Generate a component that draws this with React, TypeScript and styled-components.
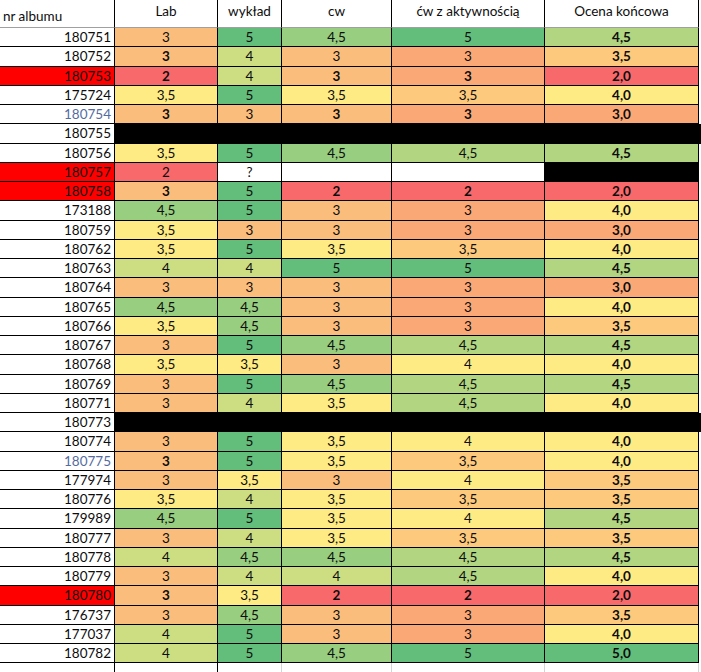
import styled, { createGlobalStyle } from "styled-components";

const GlobalStyle = createGlobalStyle`
  html, body {
    margin: 0;
    padding: 0;
    background: #ffffff;
  }
  body {
    font-family: Lato, "Liberation Sans", sans-serif;
    font-size: 13.5px;
    color: #0d0d0d;
  }
`;

const RED = "#F8696B";

// colour scales as excel put them on the sheet
const scaleA: Record<string, string> = {
  "2": RED,
  "3": "#FBBD7B",
  "3,5": "#FFEB84",
  "4": "#CCDD82",
  "4,5": "#98CE7F",
  "5": "#63BE7B",
};

const scaleB: Record<string, string> = {
  "2": RED,
  "2,0": RED,
  "3": "#FBA877",
  "3,0": "#FBA877",
  "3,5": "#FDCA7D",
  "4": "#FFEB84",
  "4,0": "#FFEB84",
  "4,5": "#B1D580",
  "5": "#63BE7B",
  "5,0": "#63BE7B",
};

const COLS = "115px 103px 64px 110px 153px 154px 2px";

type Mark = "red" | "blue" | undefined;

type Row = {
  id: string;
  mark?: Mark;
  black?: boolean;
  // lab, wyklad, cw, cw z akt, ocena ; "*" suffix = bold
  v?: string[];
};

const rows: Row[] = [
  { id: "180751", v: ["3", "5", "4,5", "5", "4,5"] },
  { id: "180752", v: ["3*", "4", "3", "3", "3,5"] },
  { id: "180753", mark: "red", v: ["2*", "4", "3*", "3*", "2,0"] },
  { id: "175724", v: ["3,5", "5", "3,5", "3,5", "4,0"] },
  { id: "180754", mark: "blue", v: ["3*", "3", "3*", "3*", "3,0"] },
  { id: "180755", black: true },
  { id: "180756", v: ["3,5", "5", "4,5", "4,5", "4,5"] },
  { id: "180757", mark: "red", v: ["2", "?", "", "", "#"] },
  { id: "180758", mark: "red", v: ["3*", "5", "2*", "2*", "2,0"] },
  { id: "173188", v: ["4,5", "5", "3", "3", "4,0"] },
  { id: "180759", v: ["3,5", "3", "3", "3", "3,0"] },
  { id: "180762", v: ["3,5", "5", "3,5", "3,5", "4,0"] },
  { id: "180763", v: ["4", "4", "5", "5", "4,5"] },
  { id: "180764", v: ["3", "3", "3", "3", "3,0"] },
  { id: "180765", v: ["4,5", "4,5", "3", "3", "4,0"] },
  { id: "180766", v: ["3,5", "4,5", "3", "3", "3,5"] },
  { id: "180767", v: ["3", "5", "4,5", "4,5", "4,5"] },
  { id: "180768", v: ["3,5", "3,5", "3", "4", "4,0"] },
  { id: "180769", v: ["3", "5", "4,5", "4,5", "4,5"] },
  { id: "180771", v: ["3", "4", "3,5", "4,5", "4,0"] },
  { id: "180773", black: true },
  { id: "180774", v: ["3", "5", "3,5", "4", "4,0"] },
  { id: "180775", mark: "blue", v: ["3*", "5", "3,5", "3,5", "4,0"] },
  { id: "177974", v: ["3", "3,5", "3", "4", "3,5"] },
  { id: "180776", v: ["3,5", "4", "3,5", "3,5", "3,5"] },
  { id: "179989", v: ["4,5", "5", "3,5", "4", "4,5"] },
  { id: "180777", v: ["3", "4", "3,5", "3,5", "3,5"] },
  { id: "180778", v: ["4", "4,5", "4,5", "4,5", "4,5"] },
  { id: "180779", v: ["3", "4", "4", "4,5", "4,0"] },
  { id: "180780", mark: "red", v: ["3*", "3,5", "2*", "2*", "2,0"] },
  { id: "176737", v: ["3", "4,5", "3", "3", "3,5"] },
  { id: "177037", v: ["4", "5", "3", "3", "4,0"] },
  { id: "180782", v: ["4", "5", "4,5", "5", "5,0"] },
];

const Sheet = styled.div`
  width: 701px;
  height: 672px;
  overflow: hidden;
  display: flex;
  flex-direction: column;
`;

const Line = styled.div<{ $h: string }>`
  display: grid;
  grid-template-columns: ${COLS};
  height: ${(p) => p.$h};
  flex: none;
`;

const Head = styled.div<{ $bottom?: boolean }>`
  display: flex;
  justify-content: ${(p) => (p.$bottom ? "flex-start" : "center")};
  align-items: ${(p) => (p.$bottom ? "flex-end" : "flex-start")};
  padding: ${(p) => (p.$bottom ? "0 0 3px 3px" : "3px 0 0")};
  border-right: 1px solid #000;
  border-bottom: 1px solid #a0a0a0;
  background: #fff;
  white-space: nowrap;
`;

const Id = styled.div<{ $mark?: Mark }>`
  display: flex;
  align-items: center;
  justify-content: flex-end;
  padding-right: 3px;
  border-right: 1px solid #000;
  border-bottom: 1px solid #000;
  background: ${(p) => (p.$mark === "red" ? "#FF0000" : "#fff")};
  color: ${(p) => (p.$mark === "blue" ? "#556B9F" : "#0d0d0d")};
`;

const Cell = styled.div<{ $bg: string; $bold?: boolean }>`
  display: flex;
  align-items: center;
  justify-content: center;
  border-right: 1px solid #000;
  border-bottom: 1px solid #000;
  background: ${(p) => p.$bg};
  font-weight: ${(p) => (p.$bold ? 700 : 400)};
`;

const Blackout = styled.div`
  grid-column: 2 / -1;
  background: #000;
`;

const Gap = styled.div`
  background: #fff;
`;

const Empty = styled.div<{ $dark?: boolean }>`
  border-right: 1px solid ${(p) => (p.$dark ? "#000" : "#d4d4d4")};
  background: #fff;
`;

function DataRow({ row }: { row: Row }) {
  return (
    <Line $h="19.25px">
      <Id $mark={row.mark}>{row.id}</Id>
      {row.black ? (
        <Blackout />
      ) : (
        <>
          {row.v!.map((raw, i) => {
            const bold = raw.endsWith("*") || i === 4;
            const val = raw.replace("*", "");
            const scale = i < 3 ? scaleA : scaleB;
            let bg = scale[val] ?? "#fff";
            if (val === "#") bg = "#000";
            return (
              <Cell key={i} $bg={bg} $bold={bold}>
                {val === "#" ? "" : val}
              </Cell>
            );
          })}
          <Gap />
        </>
      )}
    </Line>
  );
}

export default function App() {
  return (
    <>
      <GlobalStyle />
      <Sheet>
        <Line $h="28px">
          <Head $bottom>nr albumu</Head>
          <Head>Lab</Head>
          <Head>wykład</Head>
          <Head>cw</Head>
          <Head>ćw z aktywnością</Head>
          <Head>Ocena końcowa</Head>
          <Gap />
        </Line>
        {rows.map((r) => (
          <DataRow key={r.id} row={r} />
        ))}
        <Line $h="10px">
          <Empty $dark />
          <Empty $dark />
          <Empty />
          <Empty />
          <Empty />
          <Empty />
          <Gap />
        </Line>
      </Sheet>
    </>
  );
}
